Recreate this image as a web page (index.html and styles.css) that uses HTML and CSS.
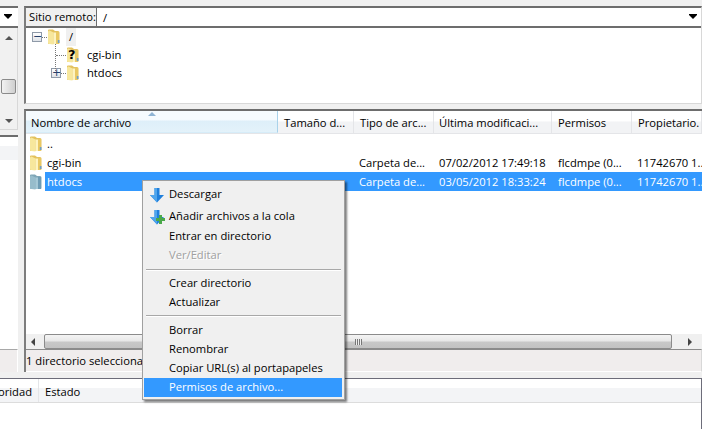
FILE: index.html
```html
<!DOCTYPE html>
<html lang="es">
<head>
    <meta charset="UTF-8">
    <title>FileZilla - Sitio remoto</title>
    <link rel="stylesheet" href="styles.css">
</head>
<body>
    <svg class="defs" width="0" height="0">
        <defs>
            <symbol id="folder" viewBox="0 0 13 16">
                <path d="M1 1.5 Q1 .5 2 .5 H6 L8 2 H11 Q12.5 2 12.5 3.5 V14 Q12.5 15 11.5 15 H2 Q1 15 1 14 Z" fill="#e3c25e"/>
                <path d="M1 3 Q1 1.5 2.5 1.5 L6.5 3.5 V15.5 L2.5 15 Q1 15 1 13.5 Z" fill="#f7e79c"/>
                <path d="M6.5 3.5 H9 V15 H6.5 Z" fill="#fdf3c0"/>
                <path d="M9 3 H12 V15 H9 Z" fill="#e9c863"/>
                <path d="M10.8 11 H12.5 V14 H10.8 Z" fill="#6f9fc8"/>
            </symbol>
            <symbol id="folder-sel" viewBox="0 0 13 16">
                <path d="M1 1.5 Q1 .5 2 .5 H6 L8 2 H11 Q12.5 2 12.5 3.5 V14 Q12.5 15 11.5 15 H2 Q1 15 1 14 Z" fill="#7fa6b6"/>
                <path d="M1 3 Q1 1.5 2.5 1.5 L6.5 3.5 V15.5 L2.5 15 Q1 15 1 13.5 Z" fill="#97bccb"/>
                <path d="M6.5 3.5 H9 V15 H6.5 Z" fill="#a5c8d6"/>
                <path d="M9 3 H12 V15 H9 Z" fill="#6f9cb4"/>
            </symbol>
            <symbol id="arrow-down" viewBox="0 0 16 16">
                <path d="M5.5 1 H10.5 V8 H15 L8 15.5 L1 8 H5.5 Z" fill="#1f7fdc"/>
                <path d="M5.5 1 H8 V15.5 L1 8 H5.5 Z" fill="#4fa5ec"/>
            </symbol>
        </defs>
    </svg>

    <div class="app">
        <div class="panes">
            <!-- local side, only a strip of it is visible -->
            <aside class="local">
                <div class="local-site"><span class="caret"></span></div>
                <div class="local-tree">
                    <span class="tri tri-up"></span>
                    <span class="local-thumb"></span>
                    <span class="tri tri-down"></span>
                </div>
                <div class="local-list"><div class="local-head"></div></div>
                <div class="local-status"></div>
            </aside>

            <main class="remote">
                <section class="site-pane">
                    <div class="site-bar">
                        <label class="site-label">Sitio remoto:</label>
                        <div class="site-path">/<span class="caret"></span></div>
                    </div>
                    <div class="tree">
                        <span class="tree-spine"></span>
                        <div class="tree-row tree-root">
                            <span class="expander">&#8722;</span><span class="dots dots-short"></span>
                            <svg class="icon"><use href="#folder"/></svg>
                            <span class="tree-name tree-current">/</span>
                        </div>
                        <div class="tree-row tree-child">
                            <span class="dots dots-long"></span>
                            <span class="unknown">
                                <svg class="icon"><use href="#folder"/></svg>
                                <b class="unknown-mark">?</b>
                            </span>
                            <span class="tree-name">cgi-bin</span>
                        </div>
                        <div class="tree-row tree-child-exp">
                            <span class="expander">+</span><span class="dots dots-short"></span>
                            <svg class="icon"><use href="#folder"/></svg>
                            <span class="tree-name">htdocs</span>
                        </div>
                    </div>
                </section>

                <section class="list-pane">
                    <div class="list-head">
                        <div class="col col-sorted"><span class="sort-mark"></span>Nombre de archivo</div>
                        <div class="col">Tamaño d...</div>
                        <div class="col">Tipo de arc...</div>
                        <div class="col col-b">Última modificaci...</div>
                        <div class="col">Permisos</div>
                        <div class="col">Propietario.</div>
                    </div>
                    <div class="list-body">
                        <div class="row">
                            <svg class="icon row-icon"><use href="#folder"/></svg>
                            <div class="cells"><span class="cell cell-name">..</span></div>
                        </div>
                        <div class="row">
                            <svg class="icon row-icon"><use href="#folder"/></svg>
                            <div class="cells">
                                <span class="cell cell-name">cgi-bin</span>
                                <span class="cell"></span>
                                <span class="cell">Carpeta de...</span>
                                <span class="cell">07/02/2012 17:49:18</span>
                                <span class="cell cell-perm">flcdmpe (0...</span>
                                <span class="cell cell-owner">11742670 1...</span>
                            </div>
                        </div>
                        <div class="row row-selected">
                            <svg class="icon row-icon"><use href="#folder-sel"/></svg>
                            <div class="cells">
                                <span class="cell cell-name">htdocs</span>
                                <span class="cell"></span>
                                <span class="cell">Carpeta de...</span>
                                <span class="cell">03/05/2012 18:33:24</span>
                                <span class="cell cell-perm">flcdmpe (0...</span>
                                <span class="cell cell-owner">11742670 1...</span>
                            </div>
                        </div>
                    </div>
                    <div class="hscroll">
                        <span class="tri tri-left"></span>
                        <div class="hscroll-thumb"><span class="grip"></span></div>
                        <span class="tri tri-right"></span>
                    </div>
                    <div class="status">1 directorio seleccionado.</div>
                </section>
            </main>
        </div>

        <section class="queue">
            <div class="queue-head">
                <div class="queue-col queue-prio">Prioridad</div>
                <div class="queue-col">Estado</div>
            </div>
        </section>
    </div>

    <ul class="menu">
        <li class="item item-icon">
            <svg class="menu-icon"><use href="#arrow-down"/></svg>Descargar
        </li>
        <li class="item item-icon">
            <span class="menu-icon-wrap">
                <svg class="menu-icon"><use href="#arrow-down"/></svg>
                <svg class="plus" viewBox="0 0 9 9"><path d="M3 0 H6 V3 H9 V6 H6 V9 H3 V6 H0 V3 H3 Z" fill="#4aa84a"/></svg>
            </span>Añadir archivos a la cola
        </li>
        <li class="item">Entrar en directorio</li>
        <li class="item item-disabled">Ver/Editar</li>
        <li class="sep sep-first"></li>
        <li class="item">Crear directorio</li>
        <li class="item">Actualizar</li>
        <li class="sep"></li>
        <li class="item">Borrar</li>
        <li class="item">Renombrar</li>
        <li class="item">Copiar URL(s) al portapapeles</li>
        <li class="item item-active">Permisos de archivo...</li>
    </ul>
</body>
</html>
```

FILE: styles.css
```css
* {
    box-sizing: border-box;
}
html, body {
    margin: 0;
    height: 429px;
    overflow: hidden;
}
body {
    font-family: "Open Sans", "Noto Sans", sans-serif;
    font-size: 11.2px;
    color: #000;
    background: #f0f0f0;
    position: relative;
}
.defs {
    display: block;
    height: 0;
}
.app {
    display: flex;
    flex-direction: column;
    height: 429px;
    padding-top: 6px;
}
.panes {
    display: flex;
    height: 366px;
    gap: 6px;
}
.icon {
    width: 13px;
    height: 16px;
    flex: none;
}

/* little scrollbar and combo triangles */
.tri {
    display: block;
    width: 0;
    height: 0;
    border-style: solid;
    border-color: transparent;
}
.tri-up {
    border-width: 0 4px 4px;
    border-bottom-color: #555;
}
.tri-down {
    border-width: 4px 4px 0;
    border-top-color: #555;
}
.tri-left {
    border-width: 4px 4px 4px 0;
    border-right-color: #444;
}
.tri-right {
    border-width: 4px 0 4px 4px;
    border-left-color: #444;
}
.caret {
    width: 0;
    height: 0;
    border-style: solid;
    border-width: 4px 4px 0;
    border-color: #000 transparent transparent;
    box-shadow: 0 -1px 0 #000;
}

/* local strip */
.local {
    width: 18px;
    flex: none;
    display: flex;
    flex-direction: column;
}
.local-site {
    height: 22px;
    background: #fff;
    border-top: 2px solid #6d6d6d;
    border-bottom: 2px solid #6d6d6d;
    display: flex;
    align-items: center;
    justify-content: flex-end;
    padding-right: 6px;
}
.local-tree {
    height: 102px;
    border-right: 1px solid #d8d8d8;
    border-bottom: 1px solid #d8d8d8;
    background: #f1f1f1;
    display: flex;
    flex-direction: column;
    align-items: center;
    padding: 8px 0 6px;
}
.local-thumb {
    width: 15px;
    height: 15px;
    margin: 39px 0 auto;
    border: 1px solid #8a8a8a;
    border-radius: 2px;
    background: linear-gradient(90deg, #f2f2f2, #cfcfcf);
}
.local-list {
    margin-top: 5px;
    height: 214px;
    background: #fff;
    border-top: 2px solid #6d6d6d;
    padding-top: 9px;
}
.local-head {
    height: 14px;
    background: #f3f4f6;
}
.local-status {
    height: 23px;
    background: #f0eded;
    border-top: 1px solid #a8a8a8;
    border-right: 1px solid #fff;
}

/* remote side */
.remote {
    flex: 1;
    min-width: 0;
    display: flex;
    flex-direction: column;
    gap: 5px;
}
.site-pane {
    height: 98px;
    display: flex;
    flex-direction: column;
    background: #fff;
    border-top: 2px solid #6d6d6d;
    border-left: 2px solid #7d7d7d;
    border-right: 1px solid #d8d8d8;
    border-bottom: 1px solid #d8d8d8;
}
.site-bar {
    height: 20px;
    display: flex;
    border-bottom: 2px solid #6d6d6d;
    flex: none;
}
.site-label {
    width: 71px;
    background: #f0f0f0;
    border-right: 1px solid #6d6d6d;
    padding-left: 3px;
    line-height: 18px;
}
.site-path {
    flex: 1;
    display: flex;
    align-items: center;
    justify-content: space-between;
    padding: 0 4px 0 6px;
}
.tree {
    position: relative;
    flex: 1;
}
.tree-spine {
    position: absolute;
    left: 29px;
    top: 16px;
    height: 27px;
    border-left: 1px dotted #777;
}
.tree-row {
    height: 18px;
    display: flex;
    align-items: center;
}
.tree-root {
    padding-left: 6px;
}
.tree-child {
    padding-left: 30px;
}
.tree-child-exp {
    padding-left: 25px;
}
.expander {
    width: 10px;
    height: 10px;
    flex: none;
    border: 1px solid #8f9aa8;
    background: linear-gradient(#fff, #dfe3e8);
    color: #24406b;
    font: 11px/8px "DejaVu Sans", sans-serif;
    text-align: center;
}
.dots {
    border-top: 1px dotted #777;
    flex: none;
}
.dots-short {
    width: 5px;
}
.dots-long {
    width: 10px;
}
.unknown {
    display: flex;
    position: relative;
}
.unknown-mark {
    position: absolute;
    left: 2px;
    top: 0;
    font: bold 13px/16px "DejaVu Sans", sans-serif;
}
.tree-name {
    margin-left: 8px;
    line-height: 18px;
}
.tree-current {
    margin-left: 6px;
    padding: 0 3px;
    background: #f0f0f0;
}

.list-pane {
    flex: 1;
    min-width: 0;
    display: flex;
    flex-direction: column;
    border-top: 2px solid #6d6d6d;
    border-left: 2px solid #7d7d7d;
    background: #fff;
}
.list-head {
    height: 23px;
    flex: none;
    display: grid;
    grid-template-columns: 252px 76px 80px 118px 80px minmax(0, 1fr);
    border-bottom: 1px solid #e4e5e8;
    background: linear-gradient(#fff 0, #fff 45%, #f2f3f5 50%, #f2f3f5 100%);
}
.col {
    padding: 3px 0 0 6px;
    border-right: 1px solid #e4e5e8;
    white-space: nowrap;
    overflow: hidden;
    position: relative;
    line-height: 18px;
}
.col-b {
    padding-left: 5px;
}
.col-sorted {
    padding-left: 5px;
    border-right-color: #a9d2ea;
    border-bottom: 1px solid #d6ecf8;
    background: linear-gradient(#f6fbfe 0, #f6fbfe 40%, #deeff9 50%, #e3f2fa 100%);
}
.sort-mark {
    position: absolute;
    left: 122px;
    top: 1px;
    width: 0;
    height: 0;
    border-style: solid;
    border-width: 0 4px 4px;
    border-color: transparent transparent #8fb4d4;
}
.list-body {
    flex: 1;
}
.row {
    height: 19px;
    display: flex;
    align-items: center;
}
.row-icon {
    margin: 0 3px;
}
.cells {
    flex: 1;
    min-width: 0;
    height: 19px;
    display: grid;
    grid-template-columns: 232px 76px 80px 118px 80px minmax(0, 1fr);
    line-height: 19px;
}
.cell {
    white-space: nowrap;
    overflow: hidden;
    padding-left: 6px;
}
.cell-name {
    padding-left: 2px;
}
.cell-perm {
    padding-left: 7px;
}
.cell-owner {
    overflow: visible;
}
.row-selected .cells {
    background: #3399ff;
    color: #fff;
}
.hscroll {
    height: 15px;
    flex: none;
    display: flex;
    align-items: center;
    background: #f0f0f0;
    margin-top: 1px;
}
.hscroll .tri-left {
    margin-left: 5px;
}
.hscroll-thumb {
    width: 628px;
    height: 15px;
    margin: 0 16px 0 9px;
    border: 1px solid #8b8b8b;
    border-radius: 2px;
    background: linear-gradient(#f4f4f4 0, #e8e8e8 45%, #c8c8c8 55%, #c2c2c2 100%);
    display: flex;
    justify-content: center;
    align-items: center;
}
.grip {
    width: 7px;
    height: 6px;
    background: repeating-linear-gradient(90deg, #777 0 1px, #eee 1px 2px);
}
.status {
    height: 23px;
    flex: none;
    background: #f0eded;
    border-top: 1px solid #8b8b8b;
    border-right: 1px solid #d8d8d8;
    border-bottom: 1px solid #fff;
    line-height: 22px;
    white-space: nowrap;
    overflow: hidden;
}

/* transfer queue */
.queue {
    margin-top: 6px;
    flex: 1;
    background: #fff;
    border-top: 1px solid #6d6d7a;
    border-right: 1px solid #6d6d7a;
}
.queue-head {
    height: 24px;
    display: flex;
    border-bottom: 1px solid #dcdcdc;
    background: linear-gradient(#fff 0, #fff 40%, #f3f4f6 41%, #f3f4f6 100%);
}
.queue-col {
    padding: 4px 0 0 6px;
    line-height: 18px;
}
.queue-prio {
    width: 39px;
    padding: 4px 6px 0 0;
    direction: rtl;
    overflow: hidden;
    white-space: nowrap;
    text-align: right;
    border-right: 1px solid #e4e5e8;
}

/* context menu */
.menu {
    position: absolute;
    left: 142px;
    top: 180px;
    width: 203px;
    height: 220px;
    margin: 0;
    padding: 2px 2px 2px 1px;
    list-style: none;
    background: #f0f0f0;
    border: 1px solid #a0a0a0;
    box-shadow: 2px 2px 2px rgba(0, 0, 0, 0.5);
}
.item {
    height: 19px;
    line-height: 18px;
    padding-left: 25px;
    position: relative;
    white-space: nowrap;
}
.item-icon {
    height: 22px;
    line-height: 21px;
}
.item-disabled {
    color: #a0a0a0;
    text-shadow: 1px 1px 0 #fff;
}
.item-active {
    background: #3399ff;
    color: #fff;
}
.sep {
    height: 9px;
    margin: 0 1px 0 2px;
    padding-top: 3px;
}
.sep-first {
    padding-top: 4px;
}
.sep::before {
    content: "";
    display: block;
    border-top: 1px solid #a8a8a8;
    border-bottom: 1px solid #fff;
}
.menu-icon {
    position: absolute;
    left: 5px;
    top: 4px;
    width: 16px;
    height: 16px;
}
.menu-icon-wrap .plus {
    position: absolute;
    left: 12px;
    top: 10px;
    width: 9px;
    height: 9px;
}
```
